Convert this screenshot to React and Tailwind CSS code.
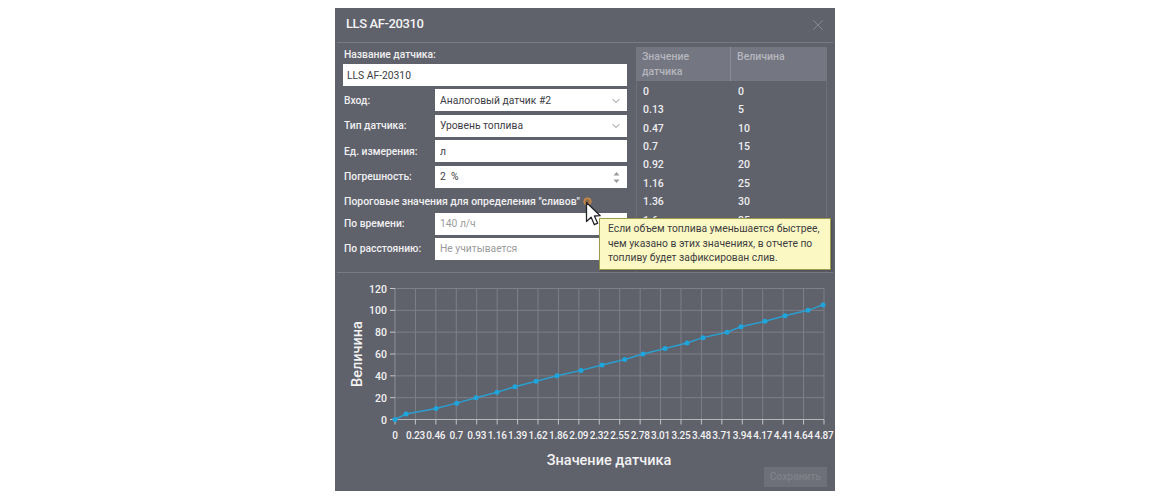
import React from "react";
import { ChevronDown, X } from "lucide-react";

const F = { fontFamily: 'Roboto,"Open Sans",sans-serif' };
const xl = ["0","0.23","0.46","0.7","0.93","1.16","1.39","1.62","1.86","2.09","2.32","2.55","2.78","3.01","3.25","3.48","3.71","3.94","4.17","4.41","4.64","4.87"];
const px = [395,406,436,456.7,476,497,515,536,557,581,602,624.7,643,665,687,703,727,741,765,785,808,823];
const rows = [["0","0"],["0.13","5"],["0.47","10"],["0.7","15"],["0.92","20"],["1.16","25"],["1.36","30"],["1.6","35"]];

function Chart() {
  const x0 = 60, y0 = 146.5, dx = 429 / 21, u = 131 / 120;
  const X = (v) => v - 335;
  const Y = (v) => y0 - v * u;
  const pts = px.map((p, i) => [X(p), Y(i * 5)]);
  return (
    <svg width="500" height="218" className="block" style={F}>
      {[20,40,60,80,100,120].map((v) => (
        <line key={v} x1={x0} x2={x0 + 429} y1={Y(v)} y2={Y(v)} stroke="#7d7f89" strokeWidth="1" />
      ))}
      {xl.map((_, i) => i > 0 && (
        <line key={i} x1={x0 + i * dx} x2={x0 + i * dx} y1={Y(120)} y2={y0} stroke="#7d7f89" strokeWidth="1" />
      ))}
      <line x1={x0} x2={x0} y1={Y(120)} y2={y0} stroke="#8d8f98" />
      <line x1={x0} x2={x0 + 429} y1={y0} y2={y0} stroke="#b4b5bb" />
      {xl.map((t, i) => (
        <g key={t}>
          <line x1={x0 + i * dx} x2={x0 + i * dx} y1={y0} y2={y0 + 5} stroke="#c4c5ca" />
          <text x={x0 + i * dx} y={y0 + 19} fill="#f2f2f3" fontSize="10" fontWeight="500" letterSpacing="-0.2" textAnchor="middle">{t}</text>
        </g>
      ))}
      {[0,20,40,60,80,100,120].map((v) => (
        <g key={v}>
          <line x1={x0 - 5} x2={x0} y1={Y(v)} y2={Y(v)} stroke="#c4c5ca" />
          <text x={x0 - 8} y={Y(v) + 4} fill="#f2f2f3" fontSize="10.5" fontWeight="500" textAnchor="end">{v}</text>
        </g>
      ))}
      <text transform="translate(27 81) rotate(-90)" fill="#f2f2f3" fontSize="14.5" fontWeight="500" textAnchor="middle">Величина</text>
      <text x="274" y="192" fill="#f2f2f3" fontSize="14.5" fontWeight="500" textAnchor="middle">Значение датчика</text>
      <polyline points={pts.map((p) => p.join(",")).join(" ")} fill="none" stroke="#2a9fd0" strokeWidth="1.5" />
      {pts.map((p, i) => <circle key={i} cx={p[0]} cy={p[1]} r="2.5" fill="#1ea5dc" />)}
    </svg>
  );
}

function Field({ label, children, muted, right }) {
  return (
    <div className="flex items-center h-[22px]">
      <div className="w-[92px] shrink-0 pl-px pt-px text-[10.3px] font-medium text-[#f0f0f2]">{label}</div>
      <div className={`flex-1 h-[22px] bg-white flex items-center pl-[5px] pr-[5px] pt-px text-[10.3px] ${muted ? "text-[#9b9b9b]" : "text-[#3c3c44]"}`}>
        <span className="flex-1">{children}</span>
        {right}
      </div>
    </div>
  );
}

const Chev = <ChevronDown size={12} strokeWidth={1.8} className="text-[#77777c]" />;
const Spin = (
  <svg width="7" height="13" viewBox="0 0 7 13" className="mr-[2px]"><path d="M3.5 1 6.5 4.5H.5z M3.5 12 .5 8.5h6z" fill="#9a9a9a" /></svg>
);

export default function App() {
  return (
    <div className="relative w-[1170px] h-[500px] bg-white overflow-hidden flex justify-center" style={F}>
      <div className="relative mt-2 w-[500px] h-[483px] bg-[#5f616b] flex flex-col">
        <div className="h-[34px] flex items-center justify-between pl-[11px] pr-[8px] shrink-0">
          <div className="text-[13px] font-medium tracking-[-0.4px] text-[#f4f4f5] mt-[-3px]">LLS AF-20310</div>
          <X size={18} strokeWidth={1.1} className="text-[#8f9199]" />
        </div>
        <div className="h-px mx-[2px] bg-[#787a84] shrink-0" />
        <div className="flex h-[229px] shrink-0 pl-2 pr-2">
          <div className="w-[284px] shrink-0 flex flex-col">
            <div className="h-[21px] flex items-center pl-px pt-[2px] text-[10.3px] font-medium text-[#f0f0f2]">Название датчика:</div>
            <div className="h-[22px] bg-white flex items-center pl-1 pt-px text-[10.3px] text-[#3c3c44]">LLS AF-20310</div>
            <div className="flex flex-col gap-[3.5px] mt-[3px]">
              <Field label="Вход:" right={Chev}>Аналоговый датчик #2</Field>
              <Field label="Тип датчика:" right={Chev}>Уровень топлива</Field>
              <Field label="Ед. измерения:">л</Field>
              <Field label="Погрешность:" right={Spin}>2&nbsp; %</Field>
            </div>
            <div className="h-[25px] flex items-center pl-px pt-[3px] text-[10.45px] font-medium text-[#f0f0f2]">Пороговые значения для определения "сливов"</div>
            <div className="flex flex-col gap-[3px]">
              <Field label="По времени:" muted>140 л/ч</Field>
              <Field label="По расстоянию:" muted>Не учитывается</Field>
            </div>
          </div>
          <div className="ml-[9px] w-[191px] mt-[4px] flex flex-col">
            <div className="h-[34px] shrink-0 bg-[#747681] flex text-[10.5px] font-medium text-[#b6b7be] leading-[15px]">
              <div className="w-[95px] pl-[6px] pt-[2px] border-r border-[#8a8c96]">Значение<br />датчика</div>
              <div className="pl-[6px] pt-[2px]">Величина</div>
            </div>
            <div className="flex-1 overflow-hidden border-x border-[#6c6e78] pt-[1px]">
              {rows.map(([a, b]) => (
                <div key={a} className="h-[18.4px] flex items-center pt-px text-[10.5px] font-medium text-[#eeeef0]">
                  <div className="w-[95px] pl-[6px]">{a}</div>
                  <div className="pl-[6px]">{b}</div>
                </div>
              ))}
            </div>
          </div>
        </div>
        <div className="h-px mx-[2px] bg-[#787a84] shrink-0" />
        <Chart />
        <button className="absolute left-[429px] top-[459px] w-[63px] h-[20px] bg-[#6e7079] text-[10.3px] font-medium text-[#7f818a]">Сохранить</button>

        <svg className="absolute left-[248px] top-[189px]" width="9" height="9" viewBox="0 0 9 9"><circle cx="4.5" cy="4.5" r="3.7" fill="#b57a45" stroke="#c98a4a" /><circle cx="4.5" cy="4.5" r="1.8" fill="#8a6a50" /></svg>
        <svg className="absolute left-[250px] top-[193px]" width="16" height="26" viewBox="0 0 16 26"><path d="M1.5 1.5v19l4.6-4.2 3.3 7.4 3.3-1.5-3.3-7.2 5.8-.3z" fill="#fff" stroke="#23232a" strokeWidth="1.3" strokeLinejoin="round" /></svg>
        <div className="absolute left-[264px] top-[210px] w-[232px] h-[52px] bg-[#fbf8c4] border border-[#9d9c4c] pl-2 pt-[3px] text-[10.3px] leading-[14.5px] whitespace-nowrap text-[#3d3d40] shadow-[1px_1px_2px_rgba(0,0,0,0.25)]">
          Если объем топлива уменьшается быстрее,<br />чем указано в этих значениях, в отчете по<br />топливу будет зафиксирован слив.
        </div>
      </div>
    </div>
  );
}
